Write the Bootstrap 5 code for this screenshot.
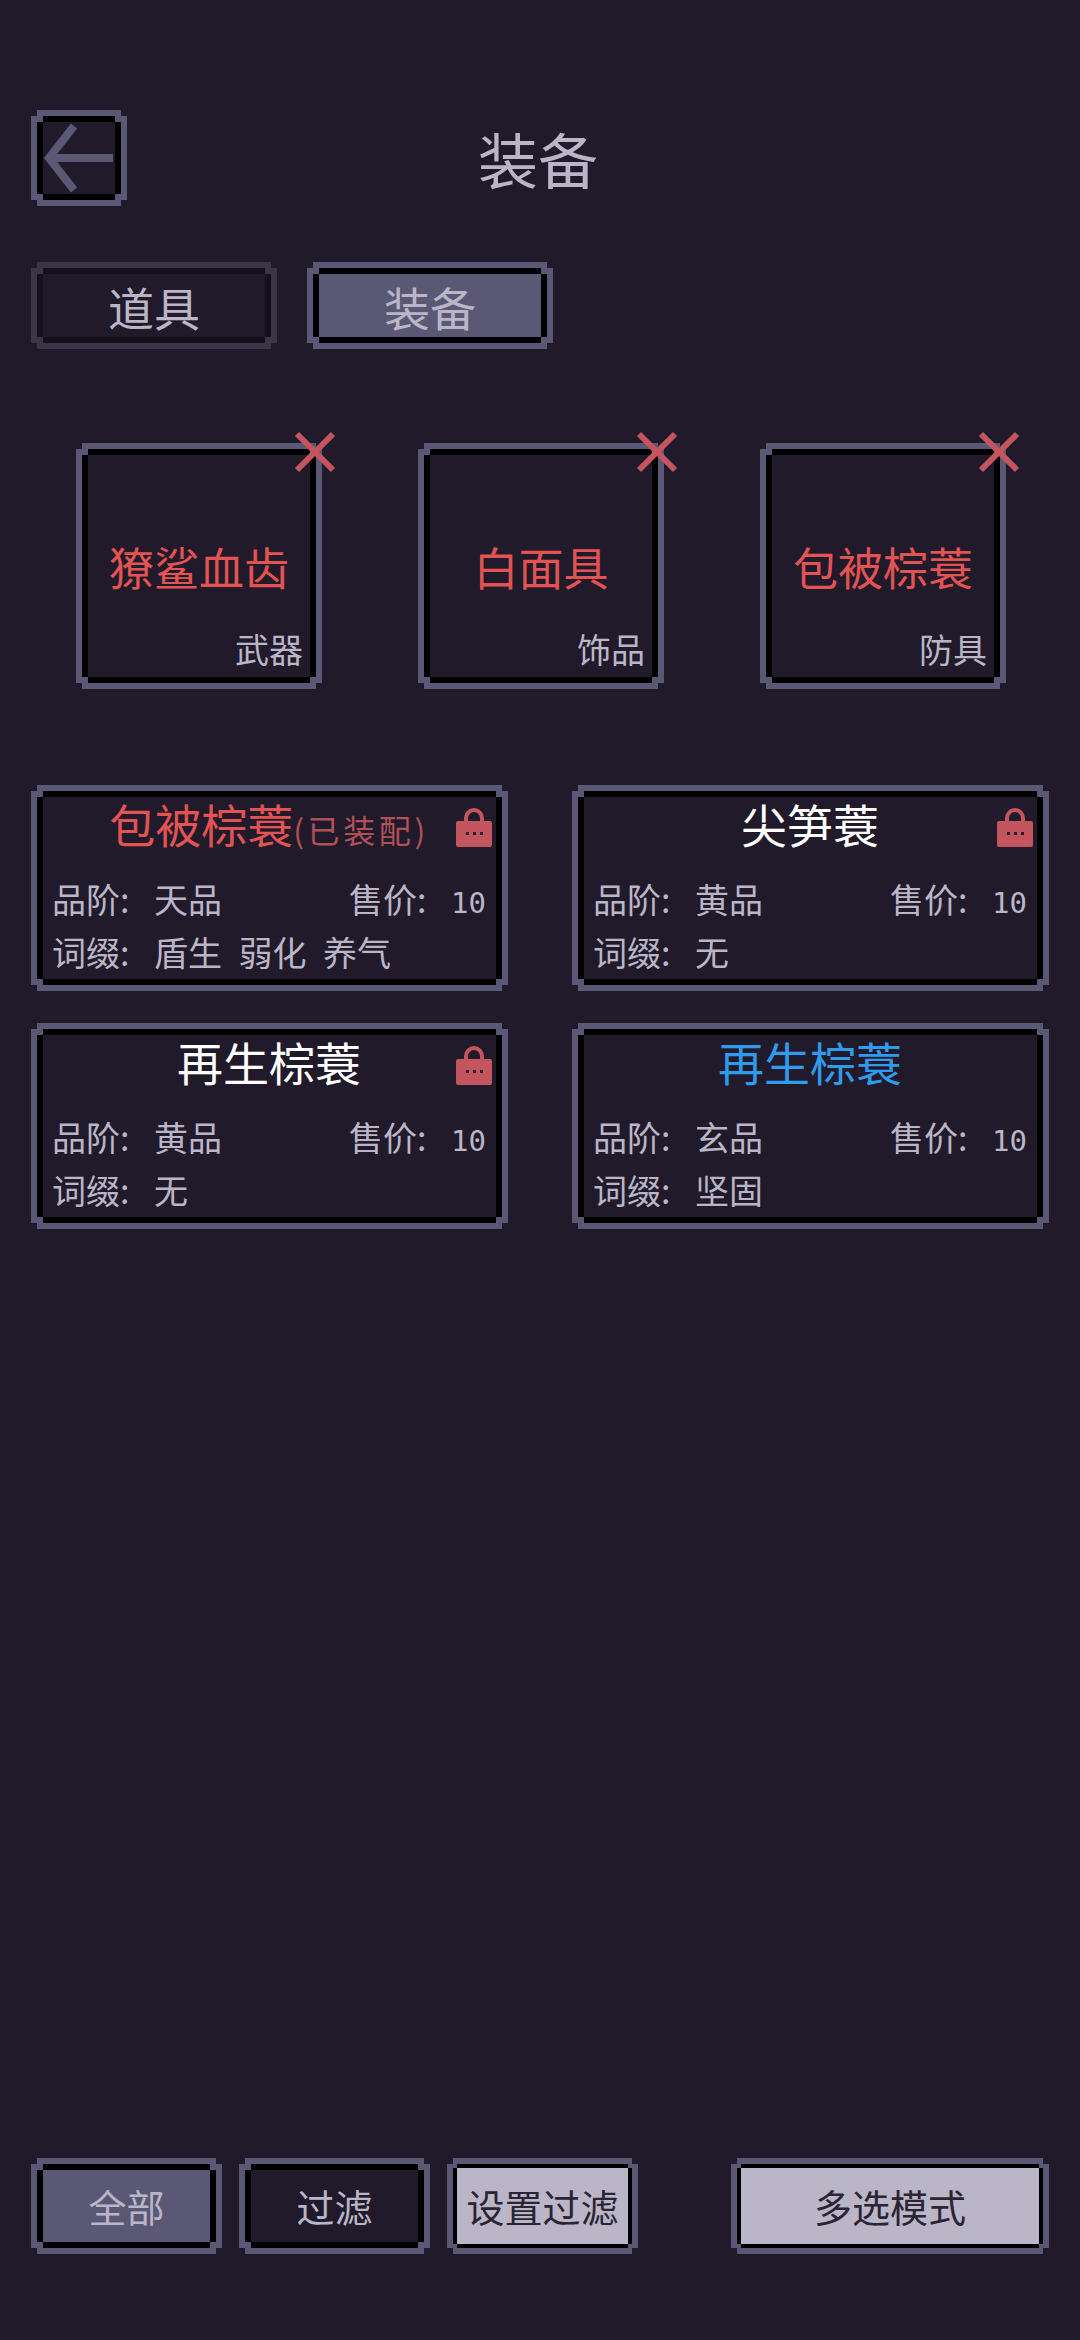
<!DOCTYPE html>
<html lang="zh">
<head>
    <meta charset="UTF-8">
    <title>装备</title>
    <link href="https://cdn.jsdelivr.net/npm/bootstrap@5.3.3/dist/css/bootstrap.min.css" rel="stylesheet">
    <style>
        :root {
            --bg-dark: #201a2a;
            --edge: #5a5875;
            --edge-dim: #3a3648;
            --pale: #bab6c8;
        }
        body {
            background-color: var(--bg-dark);
            color: var(--pale);
            font-family: "Noto Sans CJK SC", sans-serif;
        }
        .screen {
            height: 2340px;
            padding: 110px 31px 86px;
        }
        /* pixel frame: four side shadows leave the outer corners notched */
        .pix {
            --c: var(--edge);
            --k: #000;
            --in: 6px;
            position: relative;
            margin: 6px;
            background-color: transparent;
            box-shadow: -6px 0 0 var(--c), 6px 0 0 var(--c), 0 -6px 0 var(--c), 0 6px 0 var(--c), inset 0 0 0 var(--in) var(--k);
        }
        .pix::after {
            content: "";
            position: absolute;
            inset: 0;
            pointer-events: none;
            background:
                linear-gradient(var(--c), var(--c)) 0 0 / var(--in) var(--in) no-repeat,
                linear-gradient(var(--c), var(--c)) 100% 0 / var(--in) var(--in) no-repeat,
                linear-gradient(var(--c), var(--c)) 0 100% / var(--in) var(--in) no-repeat,
                linear-gradient(var(--c), var(--c)) 100% 100% / var(--in) var(--in) no-repeat;
        }
        .btn.pix {
            border: 0;
            border-radius: 0;
            padding: 0;
            color: var(--pale);
            background-color: transparent;
        }
        .btn.pix.is-on { background-color: var(--edge); }
        .btn.pix.is-light { --in: 4px; background-color: var(--pale); color: #2a2433; }
        .btn.pix.is-dim { --c: var(--edge-dim); --k: #14111c; }
        .back-btn { width: 84px; height: 84px; }
        .page-title { font-size: 60px; line-height: 96px; }
        .spacer-box { width: 100px; }
        .tabs-row { margin-top: 56px; gap: 30px; }
        .tab-btn.btn { width: 234px; height: 75px; font-size: 46px; line-height: 1; }
        .slots-row { margin-top: 94px; padding-left: 45px; gap: 96px; }
        .slot { width: 234px; height: 234px; }
        .slot-name { font-size: 45px; line-height: 1; color: #e25353; }
        .slot-tag { position: absolute; right: 13px; bottom: 14px; font-size: 34px; line-height: 40px; }
        .x-mark { position: absolute; right: -20px; top: -18px; width: 42px; height: 42px; z-index: 1; }
        .items-grid {
            display: grid;
            grid-template-columns: 477px 477px;
            column-gap: 64px;
            row-gap: 32px;
            margin-top: 96px;
        }
        .item-box { height: 194px; padding: 2px 16px 0 15px; }
        .item-title { font-size: 46px; line-height: 60px; height: 60px; margin-bottom: 19px; }
        .item-title small { font-size: 32px; line-height: 1; letter-spacing: 3.6px; color: #b2505a; }
        .tone-red { color: #e25353; }
        .tone-white { color: #fff; }
        .tone-blue { color: #2f9bec; }
        .item-line { font-size: 34px; line-height: 53px; height: 53px; word-spacing: .26em; }
        .kv-key { display: inline-block; width: 3em; }
        .num { font-family: "DejaVu Sans Mono", monospace; font-size: 29px; line-height: 1; }
        .lock-mark { position: absolute; right: 10px; top: 16px; width: 36px; height: 40px; }
        .foot-btn.btn { width: 179px; height: 84px; font-size: 38px; line-height: 1; }
        .foot-btn.wide-btn { width: 306px; }
        .foot-row { gap: 17px; }
    </style>
</head>
<body>
<div class="screen d-flex flex-column">

    <div class="d-flex align-items-center">
        <button class="btn pix back-btn d-flex align-items-center justify-content-center" type="button" aria-label="返回">
            <svg width="84" height="84" viewBox="0 0 84 84" fill="none" stroke="#5a5875" stroke-width="8">
                <path d="M12 42H76M37 10 12 42 37 74"/>
            </svg>
        </button>
        <div class="page-title flex-grow-1 text-center">装备</div>
        <div class="spacer-box"></div>
    </div>

    <div class="tabs-row d-flex">
        <button class="btn pix is-dim tab-btn" type="button">道具</button>
        <button class="btn pix is-on tab-btn" type="button">装备</button>
    </div>

    <div class="slots-row d-flex">
        <div class="card rounded-0 border-0 pix slot d-flex align-items-center justify-content-center">
            <svg class="x-mark" viewBox="0 0 42 42" stroke="#c4545e" stroke-width="6"><path d="M3 3 39 39M39 3 3 39"/></svg>
            <span class="slot-name">獠鲨血齿</span>
            <span class="slot-tag">武器</span>
        </div>
        <div class="card rounded-0 border-0 pix slot d-flex align-items-center justify-content-center">
            <svg class="x-mark" viewBox="0 0 42 42" stroke="#c4545e" stroke-width="6"><path d="M3 3 39 39M39 3 3 39"/></svg>
            <span class="slot-name">白面具</span>
            <span class="slot-tag">饰品</span>
        </div>
        <div class="card rounded-0 border-0 pix slot d-flex align-items-center justify-content-center">
            <svg class="x-mark" viewBox="0 0 42 42" stroke="#c4545e" stroke-width="6"><path d="M3 3 39 39M39 3 3 39"/></svg>
            <span class="slot-name">包被棕蓑</span>
            <span class="slot-tag">防具</span>
        </div>
    </div>

    <div class="items-grid">
        <div class="card rounded-0 border-0 pix item-box">
            <svg class="lock-mark" viewBox="0 0 36 40"><path d="M10 17V11a8 8 0 0 1 16 0v6" fill="none" stroke="#c4545e" stroke-width="4"/><rect y="14" width="36" height="26" rx="2" fill="#c4545e"/><path d="M10 25h3v3h-3zM17 25h3v3h-3zM24 25h3v3h-3z" fill="#2a1c28"/></svg>
            <div class="item-title text-center tone-red">包被棕蓑<small>(已装配)</small></div>
            <div class="item-line d-flex justify-content-between"><span><span class="kv-key">品阶:</span>天品</span><span><span class="kv-key">售价:</span><span class="num">10</span></span></div>
            <div class="item-line"><span class="kv-key">词缀:</span>盾生 弱化 养气</div>
        </div>
        <div class="card rounded-0 border-0 pix item-box">
            <svg class="lock-mark" viewBox="0 0 36 40"><path d="M10 17V11a8 8 0 0 1 16 0v6" fill="none" stroke="#c4545e" stroke-width="4"/><rect y="14" width="36" height="26" rx="2" fill="#c4545e"/><path d="M10 25h3v3h-3zM17 25h3v3h-3zM24 25h3v3h-3z" fill="#2a1c28"/></svg>
            <div class="item-title text-center tone-white">尖笋蓑</div>
            <div class="item-line d-flex justify-content-between"><span><span class="kv-key">品阶:</span>黄品</span><span><span class="kv-key">售价:</span><span class="num">10</span></span></div>
            <div class="item-line"><span class="kv-key">词缀:</span>无</div>
        </div>
        <div class="card rounded-0 border-0 pix item-box">
            <svg class="lock-mark" viewBox="0 0 36 40"><path d="M10 17V11a8 8 0 0 1 16 0v6" fill="none" stroke="#c4545e" stroke-width="4"/><rect y="14" width="36" height="26" rx="2" fill="#c4545e"/><path d="M10 25h3v3h-3zM17 25h3v3h-3zM24 25h3v3h-3z" fill="#2a1c28"/></svg>
            <div class="item-title text-center tone-white">再生棕蓑</div>
            <div class="item-line d-flex justify-content-between"><span><span class="kv-key">品阶:</span>黄品</span><span><span class="kv-key">售价:</span><span class="num">10</span></span></div>
            <div class="item-line"><span class="kv-key">词缀:</span>无</div>
        </div>
        <div class="card rounded-0 border-0 pix item-box">
            <div class="item-title text-center tone-blue">再生棕蓑</div>
            <div class="item-line d-flex justify-content-between"><span><span class="kv-key">品阶:</span>玄品</span><span><span class="kv-key">售价:</span><span class="num">10</span></span></div>
            <div class="item-line"><span class="kv-key">词缀:</span>坚固</div>
        </div>
    </div>

    <div class="foot-row d-flex mt-auto">
        <button class="btn pix is-on foot-btn" type="button">全部</button>
        <button class="btn pix foot-btn" type="button">过滤</button>
        <button class="btn pix is-light foot-btn" type="button">设置过滤</button>
        <button class="btn pix is-light foot-btn wide-btn ms-auto" type="button">多选模式</button>
    </div>

</div>
<script src="https://cdn.jsdelivr.net/npm/bootstrap@5.3.3/dist/js/bootstrap.bundle.min.js"></script>
</body>
</html>
